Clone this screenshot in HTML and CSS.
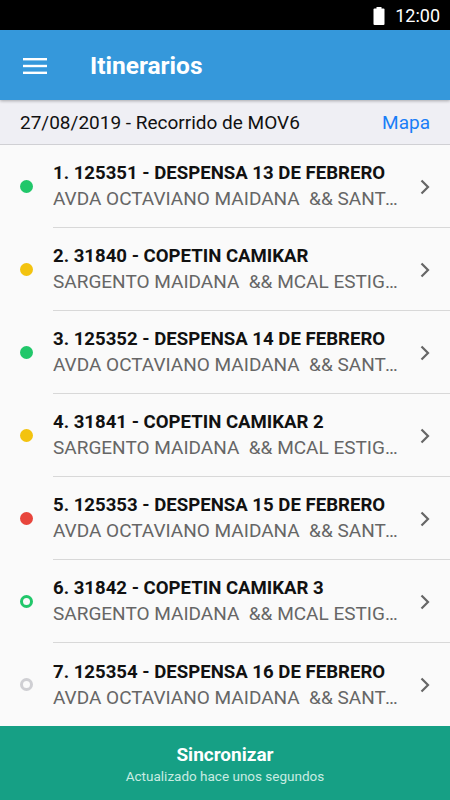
FILE: index.html
```html
<!doctype html>
<html lang='es'>
<head>
  <title>Itinerarios</title>
  <meta charset='utf-8'>
  <link rel="stylesheet" href="styles.css">
</head>
<body>
  <div class='screen'>
    <div class='statusbar'>
      <svg class='battery' width='12' height='18' viewBox='0 0 12 18'>
        <rect x='3.5' y='0' width='5' height='2' fill='#fff'/>
        <rect x='0.5' y='1.5' width='11' height='16.5' rx='1' fill='#fff'/>
      </svg>
      <span class='clock'>12:00</span>
    </div>

    <header class='appbar'>
      <svg class='menu' width='24' height='18' viewBox='0 0 24 18'>
        <rect x='0' y='1' width='24' height='2.4' fill='#fff'/>
        <rect x='0' y='7.8' width='24' height='2.4' fill='#fff'/>
        <rect x='0' y='14.6' width='24' height='2.4' fill='#fff'/>
      </svg>
      <h1>Itinerarios</h1>
    </header>

    <div class='subheader'>
      <span>27/08/2019 - Recorrido de MOV6</span>
      <a href='#'>Mapa</a>
    </div>

    <ul class='stops'>
      <li class='stop'>
        <span class='dot green'></span>
        <div class='row'>
          <div class='info'>
            <p class='name'>1. 125351 - DESPENSA 13 DE FEBRERO</p>
            <p class='addr'>AVDA OCTAVIANO MAIDANA &nbsp;&amp;&amp; SANTA TERESA ESQ</p>
          </div>
          <svg class='chev' width='10' height='16' viewBox='0 0 10 16'><path d='M1.5 1.5l6.5 6.5-6.5 6.5' fill='none' stroke='#666' stroke-width='2.2'/></svg>
        </div>
      </li>
      <li class='stop'>
        <span class='dot yellow'></span>
        <div class='row'>
          <div class='info'>
            <p class='name'>2. 31840 - COPETIN CAMIKAR</p>
            <p class='addr'>SARGENTO MAIDANA &nbsp;&amp;&amp; MCAL ESTIGARRIBIA</p>
          </div>
          <svg class='chev' width='10' height='16' viewBox='0 0 10 16'><path d='M1.5 1.5l6.5 6.5-6.5 6.5' fill='none' stroke='#666' stroke-width='2.2'/></svg>
        </div>
      </li>
      <li class='stop'>
        <span class='dot green'></span>
        <div class='row'>
          <div class='info'>
            <p class='name'>3. 125352 - DESPENSA 14 DE FEBRERO</p>
            <p class='addr'>AVDA OCTAVIANO MAIDANA &nbsp;&amp;&amp; SANTA TERESA ESQ</p>
          </div>
          <svg class='chev' width='10' height='16' viewBox='0 0 10 16'><path d='M1.5 1.5l6.5 6.5-6.5 6.5' fill='none' stroke='#666' stroke-width='2.2'/></svg>
        </div>
      </li>
      <li class='stop'>
        <span class='dot yellow'></span>
        <div class='row'>
          <div class='info'>
            <p class='name'>4. 31841 - COPETIN CAMIKAR 2</p>
            <p class='addr'>SARGENTO MAIDANA &nbsp;&amp;&amp; MCAL ESTIGARRIBIA</p>
          </div>
          <svg class='chev' width='10' height='16' viewBox='0 0 10 16'><path d='M1.5 1.5l6.5 6.5-6.5 6.5' fill='none' stroke='#666' stroke-width='2.2'/></svg>
        </div>
      </li>
      <li class='stop'>
        <span class='dot red'></span>
        <div class='row'>
          <div class='info'>
            <p class='name'>5. 125353 - DESPENSA 15 DE FEBRERO</p>
            <p class='addr'>AVDA OCTAVIANO MAIDANA &nbsp;&amp;&amp; SANTA TERESA ESQ</p>
          </div>
          <svg class='chev' width='10' height='16' viewBox='0 0 10 16'><path d='M1.5 1.5l6.5 6.5-6.5 6.5' fill='none' stroke='#666' stroke-width='2.2'/></svg>
        </div>
      </li>
      <li class='stop'>
        <span class='dot ring green'></span>
        <div class='row'>
          <div class='info'>
            <p class='name'>6. 31842 - COPETIN CAMIKAR 3</p>
            <p class='addr'>SARGENTO MAIDANA &nbsp;&amp;&amp; MCAL ESTIGARRIBIA</p>
          </div>
          <svg class='chev' width='10' height='16' viewBox='0 0 10 16'><path d='M1.5 1.5l6.5 6.5-6.5 6.5' fill='none' stroke='#666' stroke-width='2.2'/></svg>
        </div>
      </li>
      <li class='stop'>
        <span class='dot ring grey'></span>
        <div class='row'>
          <div class='info'>
            <p class='name'>7. 125354 - DESPENSA 16 DE FEBRERO</p>
            <p class='addr'>AVDA OCTAVIANO MAIDANA &nbsp;&amp;&amp; SANTA TERESA ESQ</p>
          </div>
          <svg class='chev' width='10' height='16' viewBox='0 0 10 16'><path d='M1.5 1.5l6.5 6.5-6.5 6.5' fill='none' stroke='#666' stroke-width='2.2'/></svg>
        </div>
      </li>
    </ul>

    <footer class='sync'>
      <strong>Sincronizar</strong>
      <span>Actualizado hace unos segundos</span>
    </footer>
  </div>
</body>
</html>
```

FILE: styles.css
```css
*, html { box-sizing: border-box; }
body { margin: 0; background: #fafafa; font-family: Roboto, "Noto Sans", sans-serif; }
p, h1, ul { margin: 0; padding: 0; }

.screen { width: 450px; height: 800px; display: flex; flex-direction: column; overflow: hidden; }

.statusbar { height: 30px; flex: none; background: #000; color: #fff; display: flex; align-items: center; justify-content: flex-end; padding-right: 10px; gap: 10px; }
.battery { margin-top: 1px; }
.clock { font-size: 18px; }

.appbar { height: 70px; flex: none; background: #3598db; display: flex; align-items: center; padding-left: 23px; box-shadow: 0 1px 3px rgba(0,0,0,.3); position: relative; z-index: 1; }
.menu { margin-top: 1px; }
.appbar h1 { color: #fff; font-size: 24.5px; font-weight: bold; margin-left: 43px; }

.subheader { height: 45px; flex: none; background: #efeff4; border-bottom: 1px solid #d0d0d4; display: flex; align-items: center; justify-content: space-between; padding: 0 20px; font-size: 19px; color: #111; }
.subheader a { color: #1a7ef7; text-decoration: none; }

.stops { list-style: none; flex: 1; }
.stop { height: 83px; display: flex; align-items: center; padding-left: 20px; }
.dot { width: 13px; height: 13px; border-radius: 50%; margin-right: 20px; flex: none; }
.dot.green { background: #21c76a; }
.dot.yellow { background: #f3c30f; }
.dot.red { background: #e8453c; }
.dot.ring { background: none; border: 3.5px solid; }
.dot.ring.green { border-color: #21c76a; }
.dot.ring.grey { border-color: #cfcfd3; }

.row { flex: 1; min-width: 0; height: 100%; display: flex; align-items: center; border-bottom: 1px solid #d8d8d8; padding-right: 20px; }
.stop:last-child .row { border-bottom: none; }
.info { flex: 1; min-width: 0; margin-right: 20px; }
.name, .addr { white-space: nowrap; overflow: hidden; text-overflow: ellipsis; line-height: 25px; }
.name { font-size: 18.6px; font-weight: bold; color: #111; margin-right: 4px; }
.addr { font-size: 19px; color: #666; }
.chev { flex: none; margin-top: 1px; }

.sync { height: 75px; flex: none; background: #16a085; color: #fff; display: flex; flex-direction: column; align-items: center; justify-content: center; }
.sync strong { font-size: 19px; }
.sync span { font-size: 13.5px; color: #c8ece2; margin-top: 2px; }
```
